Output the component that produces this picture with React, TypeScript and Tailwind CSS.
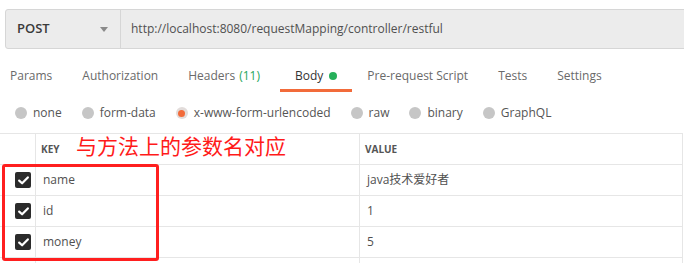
import React from "react";

const tabs = [
  { label: "Params" },
  { label: "Authorization" },
  { label: "Headers", count: "(11)" },
  { label: "Body", active: true },
  { label: "Pre-request Script" },
  { label: "Tests" },
  { label: "Settings" },
];

const bodyTypes = [
  { label: "none" },
  { label: "form-data" },
  { label: "x-www-form-urlencoded", checked: true },
  { label: "raw" },
  { label: "binary" },
  { label: "GraphQL" },
];

const rows = [
  { key: "name", value: "java技术爱好者" },
  { key: "id", value: "1" },
  { key: "money", value: "5" },
];

function CheckBox() {
  return (
    <div className="w-[16px] h-[16px] rounded-[2px] bg-[#2b2b2b] flex items-center justify-center">
      <svg width="11" height="9" viewBox="0 0 11 9" fill="none">
        <path d="M1.2 4.6 L4.1 7.3 L9.8 1.4" stroke="#fff" strokeWidth="2.2" strokeLinecap="round" strokeLinejoin="round" />
      </svg>
    </div>
  );
}

export default function App() {
  return (
    <div
      className="relative w-[684px] h-[263px] overflow-hidden bg-white text-[#505050]"
      style={{ fontFamily: '"Open Sans", "Noto Sans CJK SC", sans-serif' }}
    >
      {/* request bar */}
      <div className="pt-[9px] pl-[5px]">
        <div className="flex h-[40px] w-[700px] border border-[#d6d6d6] rounded-l-[3px] bg-[#ececec]">
          <div className="w-[115px] shrink-0 border-r border-[#d6d6d6] flex items-center justify-between pl-[11px] pr-[12px]">
            <span className="text-[13px] font-semibold text-[#3a3a3a]">POST</span>
            <svg width="8" height="5" viewBox="0 0 8 5">
              <path d="M0 0 H8 L4 5 Z" fill="#8a8a8a" />
            </svg>
          </div>
          <div className="flex items-center pl-[10px] text-[12px] text-[#505050]">
            http://localhost:8080/requestMapping/controller/restful
          </div>
        </div>
      </div>

      {/* tabs */}
      <div className="flex mt-[13px] ml-[-5px] text-[12px]">
        {tabs.map((t) => (
          <div
            key={t.label}
            className={
              "px-[15px] pt-[5px] pb-[4px] leading-[18px] border-b-[3px] flex items-center " +
              (t.count ? "mr-[5px] " : "") +
              (t.active ? "border-[#f26b3a] text-[#333]" : "border-transparent text-[#6a6a6a]")
            }
          >
            {t.label}
            {t.count && <span className="ml-[4px] text-[#26a65b]">{t.count}</span>}
            {t.active && <span className="ml-[6px] w-[8px] h-[8px] rounded-full bg-[#26b05a]" />}
          </div>
        ))}
      </div>

      {/* body types */}
      <div className="flex items-center gap-[20px] mt-[12px] pl-[15px] h-[18px] text-[12px] text-[#555]">
        {bodyTypes.map((b) => (
          <div key={b.label} className="flex items-center gap-[6px]">
            {b.checked ? (
              <span className="w-[12px] h-[12px] rounded-full bg-[#e2dcda] flex items-center justify-center">
                <span className="w-[7px] h-[7px] rounded-full bg-[#f26b3a]" />
              </span>
            ) : (
              <span className="w-[12px] h-[12px] rounded-full bg-[#c6c6c6]" />
            )}
            <span>{b.label}</span>
          </div>
        ))}
      </div>

      {/* table */}
      <div className="mt-[11px] w-[683px] border-t border-r border-[#e6e6e6]">
        <div className="flex h-[31px] border-b border-[#e6e6e6]">
          <div className="w-[36px] border-r border-[#e6e6e6]" />
          <div className="w-[324px] border-r border-[#e6e6e6] flex items-center pl-[5px] text-[10px] font-bold text-[#555]">
            KEY
          </div>
          <div className="flex-1 flex items-center pl-[5px] text-[10px] font-bold text-[#555]">VALUE</div>
        </div>
        {rows.map((r) => (
          <div key={r.key} className="flex h-[31px] border-b border-[#e6e6e6] text-[12px]">
            <div className="w-[36px] border-r border-[#e6e6e6] flex items-center pl-[15px]">
              <CheckBox />
            </div>
            <div className="w-[324px] border-r border-[#e6e6e6] flex items-center pl-[7px]">{r.key}</div>
            <div className="flex-1 flex items-center pl-[7px]">{r.value}</div>
          </div>
        ))}
        <div className="flex h-[10px]">
          <div className="w-[36px] border-r border-[#e6e6e6]" />
          <div className="w-[324px] border-r border-[#e6e6e6]" />
        </div>
      </div>

      {/* annotation */}
      <div
        className="absolute left-[76px] top-[131px] text-[21px] leading-[28px] text-[#ff1a1a]"
        style={{ fontFamily: '"Noto Sans CJK SC", sans-serif' }}
      >
        与方法上的参数名对应
      </div>
      <div className="absolute left-[2px] top-[164px] w-[157px] h-[97px] border-[3px] border-[#ff1f1f] rounded-[3px]" />
    </div>
  );
}
